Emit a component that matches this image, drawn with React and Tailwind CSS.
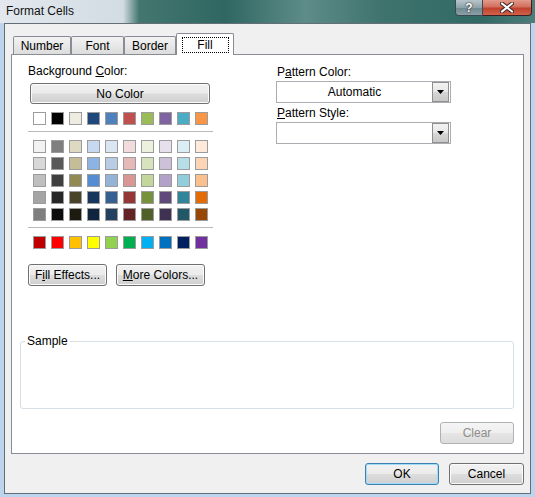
import React from 'react'

const themeRow = ['#FFFFFF', '#000000', '#EEECE1', '#1F497D', '#4F81BD', '#C0504D', '#9BBB59', '#8064A2', '#4BACC6', '#F79646']

const tintRows = [
  ['#F2F2F2', '#7F7F7F', '#DDD9C3', '#C6D9F0', '#DBE5F1', '#F2DCDB', '#EBF1DD', '#E5E0EC', '#DBEEF3', '#FDEADA'],
  ['#D8D8D8', '#595959', '#C4BD97', '#8DB3E2', '#B8CCE4', '#E5B9B7', '#D7E3BC', '#CCC1D9', '#B7DDE8', '#FBD5B5'],
  ['#BFBFBF', '#3F3F3F', '#938953', '#548DD4', '#95B3D7', '#D99694', '#C3D69B', '#B2A2C7', '#92CDDC', '#FAC08F'],
  ['#A5A5A5', '#262626', '#494429', '#17365D', '#366092', '#953734', '#76923C', '#5F497A', '#31859B', '#E36C09'],
  ['#7F7F7F', '#0C0C0C', '#1D1B10', '#0F243E', '#244061', '#632423', '#4F6128', '#3F3151', '#205867', '#974806'],
]

const standardRow = ['#C00000', '#FF0000', '#FFC000', '#FFFF00', '#92D050', '#00B050', '#00B0F0', '#0070C0', '#002060', '#7030A0']

const Swatch = ({ color }) => (
  <div className="w-[13px] h-[13px] border border-[#9c9c9c]" style={{ backgroundColor: color }} />
)

const SwatchRow = ({ colors }) => (
  <div className="flex gap-[5px] ml-[5px]">
    {colors.map((c, i) => (
      <Swatch key={i} color={c} />
    ))}
  </div>
)

const WinButton = ({ children, className = '' }) => (
  <div
    className={`h-[22px] rounded-[3px] border border-[#707070] bg-[linear-gradient(180deg,#f2f2f2_0%,#ebebeb_48%,#dddddd_52%,#cfcfcf_100%)] shadow-[inset_0_0_0_1px_#fbfbfb] flex items-center justify-center leading-[14px] ${className}`}
  >
    {children}
  </div>
)

const Dropdown = ({ value }) => (
  <div className="w-[175px] h-[22px] border border-[#abadb3] bg-white flex items-center">
    <div className="flex-1 text-center leading-[14px]">{value}</div>
    <div className="w-[17px] h-[20px] mr-px border border-[#8e8f8f] bg-[linear-gradient(180deg,#f3f3f3_0%,#e6e6e6_50%,#d6d6d6_52%,#c8c8c8_100%)] flex items-center justify-center">
      <svg width="7" height="4" viewBox="0 0 7 4">
        <path d="M0 0h7L3.5 4z" fill="#000" />
      </svg>
    </div>
  </div>
)

const Tab = ({ label, w }) => (
  <div
    className={`${w} h-[18px] rounded-t-[2px] border border-b-0 border-[#898c95] bg-[linear-gradient(180deg,#f2f2f2_0%,#e8e8e8_50%,#dcdcdc_100%)] flex items-center justify-center leading-[14px]`}
  >
    {label}
  </div>
)

export default function App() {
  return (
    <div className="w-[535px] h-[497px] overflow-hidden flex flex-col bg-[#bcd4ec] font-['Liberation_Sans',Arial,sans-serif] text-[12px] text-black">
      {/* title bar */}
      <div className="h-[23px] shrink-0 flex items-start justify-between bg-[linear-gradient(90deg,#e2e8ee_0%,#d3dce3_23%,#44766f_26%,#2f6762_42%,#5e8c88_57%,#3e726d_72%,#306a65_90%,#4c7d79_100%)]">
        <div className="pl-[6px] pt-[4px] leading-[14px] text-[#111]">Format Cells</div>
        <div className="flex mr-[3px]">
          <div className="w-[28px] h-[16px] rounded-bl-[4px] border border-t-0 border-[#3a4a52] bg-[linear-gradient(180deg,#b8c6cc_0%,#8fa3aa_50%,#6f878f_52%,#8aa0a6_100%)] flex items-center justify-center text-white font-bold text-[12px] leading-[12px] [text-shadow:0_0_2px_#222,0_0_1px_#222]">
            ?
          </div>
          <div className="w-[49px] h-[16px] rounded-br-[4px] border border-t-0 border-l-0 border-[#3a2020] bg-[linear-gradient(180deg,#e39a8a_0%,#d2705f_45%,#c0412c_55%,#d1634a_100%)] flex items-center justify-center">
            <svg width="14" height="11" viewBox="0 0 14 11">
              <path d="M2 1.5L12 9.5M12 1.5L2 9.5" stroke="#3b2222" strokeWidth="4" strokeLinecap="square" />
              <path d="M2 1.5L12 9.5M12 1.5L2 9.5" stroke="#fff" strokeWidth="2" strokeLinecap="square" />
            </svg>
          </div>
        </div>
      </div>

      {/* client area */}
      <div className="flex-1 mx-[4px] mb-[3px] border border-[#646e78] bg-[#f0f0f0] flex flex-col pt-[9px]">
        {/* tabs */}
        <div className="h-[21px] flex items-end pl-[8px]">
          <Tab label="Number" w="w-[58px]" />
          <Tab label="Font" w="w-[53px]" />
          <Tab label="Border" w="w-[52px]" />
          <div className="relative z-10 w-[58px] h-[22px] -mb-px rounded-t-[2px] border border-b-0 border-[#898c95] bg-white flex items-start justify-center pt-[3px]">
            <div className="w-[47px] h-[16px] border border-dotted border-black flex items-center justify-center leading-[14px]">
              Fill
            </div>
          </div>
        </div>

        {/* tab panel */}
        <div className="mx-[6px] h-[400px] border border-[#898c95] bg-white flex flex-col">
          <div className="flex pt-[9px] pl-[16px]">
            {/* left column */}
            <div className="w-[185px] flex flex-col">
              <div className="leading-[14px] h-[14px]">
                Background <span className="underline">C</span>olor:
              </div>
              <WinButton className="mt-[5px] ml-[2px] w-[180px] !h-[21px]">No Color</WinButton>
              <div className="mt-[8px]">
                <SwatchRow colors={themeRow} />
              </div>
              <div className="mt-[6px] h-px w-[185px] bg-[#b9b9b9]" />
              <div className="mt-[8px] flex flex-col gap-[4px]">
                {tintRows.map((row, i) => (
                  <SwatchRow key={i} colors={row} />
                ))}
              </div>
              <div className="mt-[6px] h-px w-[185px] bg-[#b9b9b9]" />
              <div className="mt-[8px]">
                <SwatchRow colors={standardRow} />
              </div>
              <div className="mt-[15px] flex gap-[9px]">
                <WinButton className="w-[79px]">
                  F<span className="underline">i</span>ll Effects...
                </WinButton>
                <WinButton className="w-[89px]">
                  <span className="underline">M</span>ore Colors...
                </WinButton>
              </div>
            </div>

            {/* right column */}
            <div className="ml-[63px] pt-[1px] flex flex-col">
              <div className="ml-[1px] leading-[14px] h-[14px]">
                P<span className="underline">a</span>ttern Color:
              </div>
              <div className="mt-[2px]">
                <Dropdown value="Automatic" />
              </div>
              <div className="mt-[3px] ml-[1px] leading-[14px] h-[14px]">
                <span className="underline">P</span>attern Style:
              </div>
              <div className="mt-[2px]">
                <Dropdown value="" />
              </div>
            </div>
          </div>

          {/* sample */}
          <div className="relative mt-[55px] ml-[8px] mr-[9px] h-[68px] rounded-[3px] border border-[#d5dfe5]">
            <div className="absolute left-[4px] top-[-8px] px-[2px] bg-white leading-[14px]">Sample</div>
          </div>

          <div className="mt-[13px] mr-[9px] self-end">
            <div className="w-[74px] h-[22px] rounded-[3px] border border-[#adb2b5] bg-[linear-gradient(180deg,#f4f4f4_0%,#efefef_48%,#e5e5e5_52%,#dcdcdc_100%)] flex items-center justify-center leading-[14px] text-[#8d8d8d]">
              Clear
            </div>
          </div>
        </div>

        {/* dialog buttons */}
        <div className="mt-[9px] flex justify-end gap-[10px] pr-[6px]">
          <WinButton className="w-[74px] !border-[#3c7fb1] !shadow-[inset_0_0_0_1px_#9fdcf8]">OK</WinButton>
          <WinButton className="w-[75px]">Cancel</WinButton>
        </div>
      </div>
    </div>
  )
}
